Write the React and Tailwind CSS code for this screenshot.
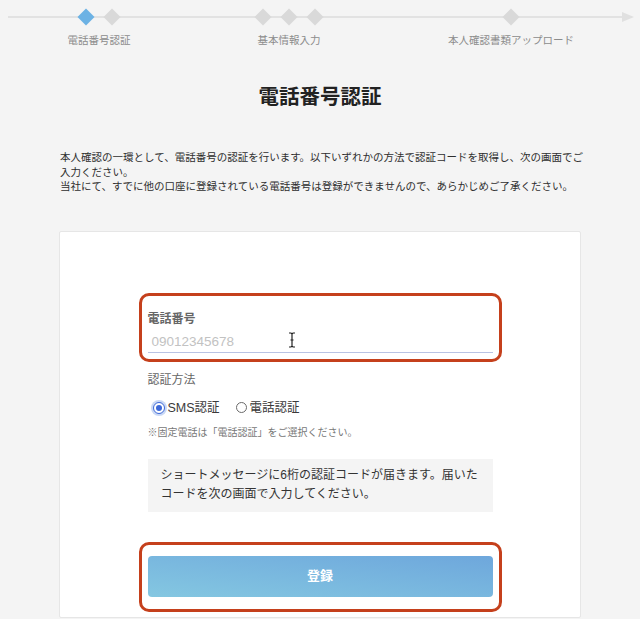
const steps = [
  { label: '電話番号認証', center: 99, dots: [86, 112], active: 0 },
  { label: '基本情報入力', center: 289, dots: [263, 289, 315], active: -1 },
  { label: '本人確認書類アップロード', center: 511, dots: [511], active: -1 },
];

const Stepper = () => (
  <div className="relative h-[54px]">
    {/* line with arrow head */}
    <div className="absolute left-[8px] right-[14px] top-[16px] h-[2px] bg-[#e2e2e2]" />
    <svg className="absolute right-[6px] top-[11px]" width="12" height="12" viewBox="0 0 12 12">
      <polygon points="0,1 12,6 0,11" fill="#e0e0e0" />
    </svg>

    {steps.map((s) => (
      <div key={s.label}>
        {s.dots.map((x, i) => (
          <div
            key={x}
            className={`absolute top-[11px] h-[12px] w-[12px] rotate-45 ${
              i === s.active ? 'bg-[#6cb2e4]' : 'bg-[#d9d9d9]'
            }`}
            style={{ left: x - 6 }}
          />
        ))}
        <div
          className="absolute top-[33px] -translate-x-1/2 whitespace-nowrap text-[10.5px] leading-[14px] text-[#8c8c8c]"
          style={{ left: s.center }}
        >
          {s.label}
        </div>
      </div>
    ))}
  </div>
);

const Radio = ({ checked, label }) => (
  <label className="flex items-center gap-[3px]">
    {checked ? (
      <span className="flex h-[12px] w-[12px] items-center justify-center rounded-full border border-[#3d68d8] bg-white shadow-[0_0_0_2px_#c9d8f5]">
        <span className="h-[6px] w-[6px] rounded-full bg-[#3d68d8]" />
      </span>
    ) : (
      <span className="h-[11px] w-[11px] rounded-full border border-[#6a6a6a] bg-white" />
    )}
    <span className="text-[12.5px] leading-[16px] text-[#3a3a3a]">{label}</span>
  </label>
);

const IBeam = () => (
  <svg className="absolute left-[140px] top-[3px]" width="8" height="16" viewBox="0 0 8 16">
    <path d="M1 1h2l1 1 1-1h2M4 2v12M1 15h2l1-1 1 1h2M2.5 8h3" stroke="#222" strokeWidth="1.2" fill="none" />
  </svg>
);

export default function App() {
  return (
    <div
      className="min-h-[619px] w-full overflow-hidden bg-[#f4f4f4]"
      style={{ fontFamily: '"Liberation Sans", "Noto Sans CJK JP", sans-serif' }}
    >
      <Stepper />

      <h1 className="mt-[29px] text-center text-[20.5px] font-bold leading-[28px] text-[#222]">電話番号認証</h1>

      <div className="ml-[60px] mt-[39px] w-[530px] text-[10.5px] leading-[14.5px] text-[#2e2e2e]">
        <p>本人確認の一環として、電話番号の認証を行います。以下いずれかの方法で認証コードを取得し、次の画面でご入力ください。</p>
        <p>当社にて、すでに他の口座に登録されている電話番号は登録ができませんので、あらかじめご了承ください。</p>
      </div>

      <div className="mx-[59px] mt-[37px] rounded-[2px] border border-[#e6e6e6] bg-white pb-[5px] pt-[61px]">
        <div className="mx-auto flex w-[363px] flex-col">
          {/* phone number field */}
          <div className="rounded-[10px] border-[3px] border-[#c5401c] px-[6px] pb-[6px] pt-[15px]">
            <div className="text-[12px] font-bold leading-[16px] text-[#666]">電話番号</div>
            <div className="relative mt-[2px] h-[24px] border-b border-[#b9c3e3] pl-[4px]">
              <span className="text-[13.5px] leading-[22px] text-[#c2c2c2]">09012345678</span>
              <IBeam />
            </div>
          </div>

          <div className="px-[9px]">
            <div className="mt-[10px] text-[12px] leading-[16px] text-[#666]">認証方法</div>
            <div className="mt-[12px] flex items-center gap-[16px] pl-[5px]">
              <Radio checked label="SMS認証" />
              <Radio label="電話認証" />
            </div>
            <div className="mt-[10px] text-[10px] leading-[14px] text-[#777]">※固定電話は「電話認証」をご選択ください。</div>
            <div className="mt-[19px] bg-[#f4f4f4] px-[13px] pb-[8px] pt-[7px] text-[12px] leading-[19px] text-[#333]">
              ショートメッセージに6桁の認証コードが届きます。届いたコードを次の画面で入力してください。
            </div>
          </div>

          {/* submit button */}
          <div className="mt-[30px] rounded-[10px] border-[3px] border-[#c5401c] px-[6px] pb-[12px] pt-[11px]">
            <button className="h-[41px] w-full rounded-[4px] bg-linear-to-tr from-[#84c7e1] to-[#6ea7dc] text-[13px] font-bold text-white">
              登録
            </button>
          </div>
        </div>
      </div>
    </div>
  );
}
